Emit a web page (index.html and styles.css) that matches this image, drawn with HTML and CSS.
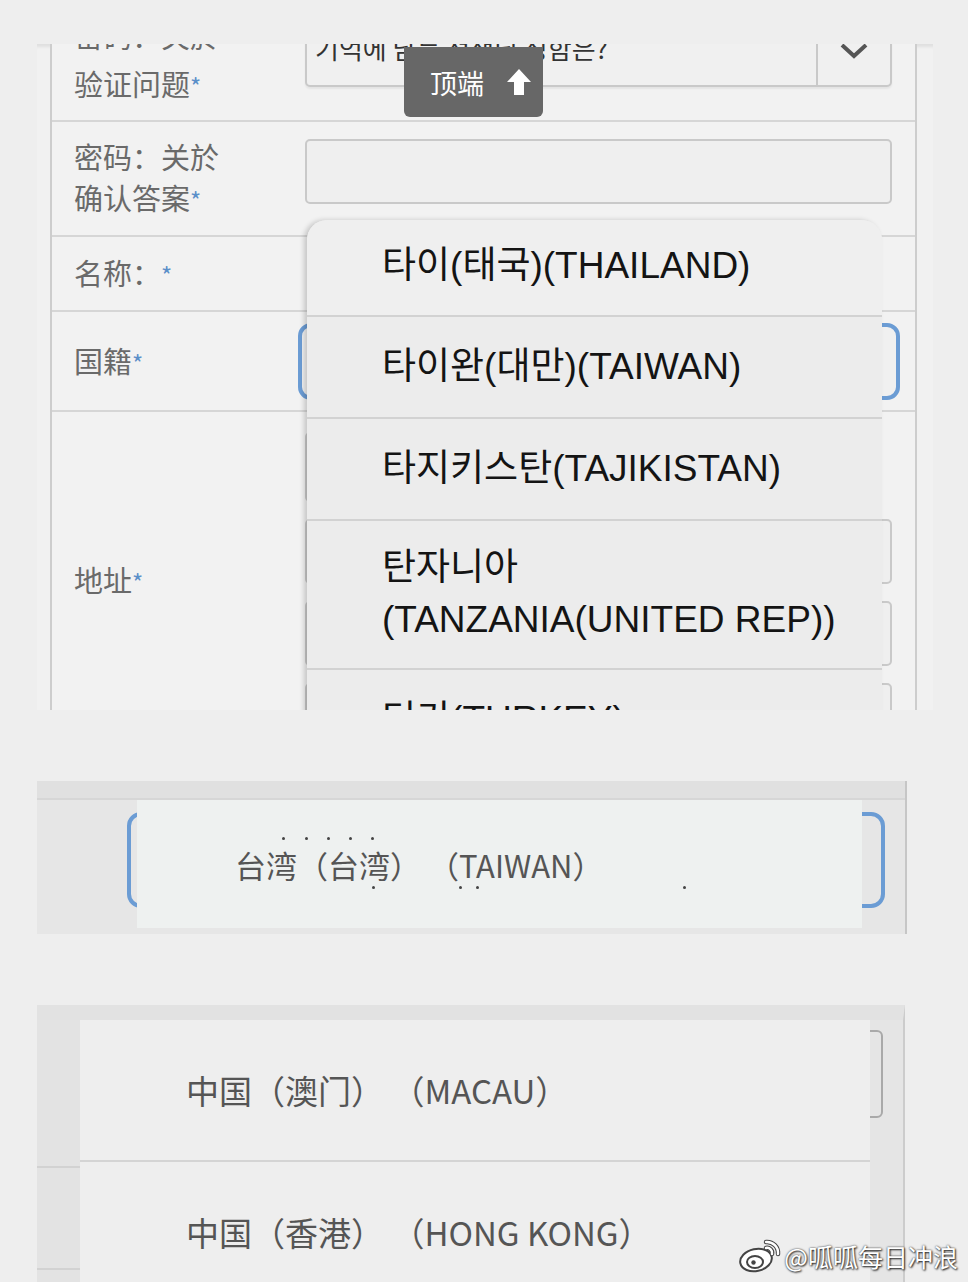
FILE: index.html
```html
<!DOCTYPE html>
<html lang="zh-CN">
<head>
    <meta charset="UTF-8">
    <meta name="viewport" content="width=device-width, initial-scale=1.0">
    <title>国籍选择</title>
    <link rel="stylesheet" href="styles.css">
</head>
<body>
    <div class="page">
        <!-- 第一张截图：注册表单 + 打开的国家下拉列表 -->
        <div class="shot shot-form">
            <div class="form">
                <div class="row row-question">
                    <div class="label">密码：关於<br>验证问题<span class="req">*</span></div>
                    <div class="field">
                        <div class="select">
                            <span class="select-text">기억에 남는 선생님 성함은?</span>
                            <span class="select-btn">
                                <svg width="30" height="18" viewBox="0 0 30 18"><path d="M3 3 L15 14 L27 3" fill="none" stroke="#555" stroke-width="4"/></svg>
                            </span>
                        </div>
                    </div>
                </div>
                <div class="row row-answer">
                    <div class="label">密码：关於<br>确认答案<span class="req">*</span></div>
                    <div class="field"><div class="input"></div></div>
                </div>
                <div class="row row-name">
                    <div class="label">名称：<span class="req">*</span></div>
                    <div class="field"></div>
                </div>
                <div class="row row-country">
                    <div class="label">国籍<span class="req">*</span></div>
                    <div class="field"><div class="select-focus"></div></div>
                </div>
                <div class="row row-address">
                    <div class="label">地址<span class="req">*</span></div>
                    <div class="field field-stack">
                        <div class="input input-short"></div>
                        <div class="input"></div>
                        <div class="input"></div>
                        <div class="input"></div>
                    </div>
                </div>
            </div>

            <ul class="dropdown">
                <li class="first">타이(태국)(THAILAND)</li>
                <li>타이완(대만)(TAIWAN)</li>
                <li>타지키스탄(TAJIKISTAN)</li>
                <li class="two-line">탄자니아<br>(TANZANIA(UNITED REP))</li>
                <li>터키(TURKEY)</li>
            </ul>

            <div class="to-top">
                <span>顶端</span>
                <svg width="26" height="28" viewBox="0 0 26 28"><path d="M13 1 L25 14 L18 14 L18 27 L8 27 L8 14 L1 14 Z" fill="#fff"/></svg>
            </div>
        </div>

        <!-- 第二张截图：中文界面的台湾选项 -->
        <div class="shot shot-tw">
            <div class="tw-band"></div>
            <div class="tw-select"></div>
            <div class="tw-option">
                <span class="tw-text">台湾（台湾） （TAIWAN）</span>
                <span class="dot d1"></span><span class="dot d2"></span><span class="dot d3"></span>
                <span class="dot d4"></span><span class="dot d5"></span><span class="dot d6"></span>
                <span class="dot d7"></span><span class="dot d8"></span><span class="dot d9"></span>
            </div>
        </div>

        <!-- 第三张截图：澳门 / 香港 -->
        <div class="shot shot-cn">
            <div class="cn-side">
                <div class="cn-side-row"></div>
                <div class="cn-side-row cn-side-mid"></div>
            </div>
            <div class="cn-main">
                <div class="cn-select"></div>
                <ul class="cn-list">
                    <li>中国（澳门） （MACAU）</li>
                    <li>中国（香港） （HONG KONG）</li>
                </ul>
            </div>
        </div>
    </div>

    <div class="watermark">
        <svg width="44" height="34" viewBox="0 0 44 34">
            <ellipse cx="18" cy="21" rx="16" ry="11" transform="rotate(-12 18 21)" fill="#fff" stroke="#444" stroke-width="2"/>
            <ellipse cx="17" cy="23" rx="8" ry="6" fill="none" stroke="#444" stroke-width="2"/>
            <circle cx="15.5" cy="23.5" r="2.2" fill="#444"/>
            <path d="M28 3 A11 11 0 0 1 40 15" fill="none" stroke="#444" stroke-width="4.5" stroke-linecap="round"/>
            <path d="M28 3 A11 11 0 0 1 40 15" fill="none" stroke="#fff" stroke-width="2.5" stroke-linecap="round"/>
            <path d="M28 9 A5 5 0 0 1 34 15" fill="none" stroke="#444" stroke-width="4.5" stroke-linecap="round"/>
            <path d="M28 9 A5 5 0 0 1 34 15" fill="none" stroke="#fff" stroke-width="2.5" stroke-linecap="round"/>
        </svg>
        <span>@呱呱每日冲浪</span>
    </div>
</body>
</html>
```

FILE: styles.css
```css
body {
    margin: 0;
    width: 968px;
    height: 1282px;
    overflow: hidden;
    position: relative;
    background-color: #eeeeee;
    font-family: "Noto Sans CJK SC", "Liberation Sans", sans-serif;
}

.page {
    display: flex;
    flex-direction: column;
    gap: 71px;
    padding-top: 44px;
}

.shot {
    position: relative;
    overflow: hidden;
    margin-left: 37px;
}

/* ---------- 截图 1 ---------- */

.shot-form {
    width: 896px;
    height: 666px;
    background-color: #f1f1f1;
    box-shadow: inset 0 5px 3px -2px rgba(0, 0, 0, 0.07);
}

.form {
    margin: -38px 16px 0 13px;
    border-left: 2px solid #cdcdcd;
    border-right: 2px solid #cdcdcd;
    background-color: #f2f2f2;
}

.row {
    display: grid;
    grid-template-columns: 253px 587px;
    padding-right: 23px;
    border-bottom: 2px solid #d6d6d6;
}

.label {
    padding-left: 22px;
    font-size: 29px;
    line-height: 41px;
    color: #6a6a6a;
}

.req {
    color: #5b8fc9;
    font-size: 24px;
}

.row-question {
    height: 114px;
}

.row-question .label {
    padding-top: 5px;
    line-height: 48px;
}

.select {
    margin-top: 16px;
    height: 61px;
    display: flex;
    background-color: #f0f0f0;
    border: 2px solid #c9c9c9;
    border-radius: 5px;
    box-shadow: 0 2px 2px rgba(0, 0, 0, 0.06);
}

.select-text {
    flex: 1;
    padding: 5px 8px;
    font-family: "Noto Sans CJK KR", sans-serif;
    font-size: 26px;
    color: #333;
    white-space: nowrap;
    overflow: hidden;
}

.select-btn {
    width: 72px;
    border-left: 2px solid #c9c9c9;
    display: flex;
    justify-content: center;
    padding-top: 18px;
}

.row-answer {
    height: 113px;
}

.row-answer .label {
    padding-top: 14px;
}

.input {
    height: 61px;
    background-color: #efefef;
    border: 2px solid #c9c9c9;
    border-radius: 5px;
}

.row-answer .input {
    margin-top: 17px;
}

.row-name {
    height: 73px;
    align-items: center;
}

.row-country {
    height: 98px;
    align-items: center;
}

.select-focus {
    height: 69px;
    margin: 0 -8px 0 -7px;
    border: 4px solid #6b9cd4;
    border-radius: 13px;
    background-color: #f0f0f0;
}

.row-address {
    height: 320px;
    align-items: center;
}

.field-stack {
    display: flex;
    flex-direction: column;
    gap: 17px;
    align-self: start;
    padding-top: 20px;
}

.input-short {
    width: 300px;
    height: 66px;
}

/* 下拉列表 */

.dropdown {
    position: absolute;
    left: 270px;
    top: 176px;
    width: 575px;
    margin: 0;
    padding: 0;
    list-style: none;
    background-color: #ececec;
    border-radius: 20px 20px 0 0;
    box-shadow: -3px 0 5px rgba(0, 0, 0, 0.18);
    font-family: "Liberation Sans", "Noto Sans CJK KR", sans-serif;
    font-size: 37px;
    line-height: 52px;
    color: #141414;
}

.dropdown li {
    padding: 24px 0 24px 75px;
    border-bottom: 2px solid #d2d2d2;
    white-space: nowrap;
}

.dropdown li.first {
    padding-top: 20px;
    padding-bottom: 23px;
    background-color: #efefef;
    border-radius: 20px 20px 0 0;
}

.dropdown li.two-line {
    padding-top: 21px;
    padding-bottom: 22px;
}

/* 顶端按钮 */

.to-top {
    position: absolute;
    left: 367px;
    top: 3px;
    width: 139px;
    height: 70px;
    display: flex;
    align-items: center;
    gap: 22px;
    padding-left: 26px;
    box-sizing: border-box;
    background-color: #676767;
    border-radius: 0 0 6px 6px;
    color: #fff;
    font-size: 27px;
}

/* ---------- 截图 2 ---------- */

.shot-tw {
    width: 868px;
    height: 153px;
    background-color: #e6e6e6;
    border-right: 2px solid #c6c6c6;
}

.tw-band {
    height: 17px;
    background-color: #e0e0e0;
    border-bottom: 2px solid #d6d6d6;
}

.tw-select {
    margin: 12px 20px 0 90px;
    height: 88px;
    border: 4px solid #6b9cd4;
    border-radius: 14px;
}

.tw-option {
    position: absolute;
    left: 100px;
    top: 19px;
    width: 725px;
    height: 128px;
    display: flex;
    align-items: center;
    padding-left: 98px;
    box-sizing: border-box;
    background-color: #eef1f0;
    font-size: 31px;
    color: #555;
}

.tw-text {
    white-space: pre;
}

.dot {
    position: absolute;
    width: 3px;
    height: 3px;
    border-radius: 50%;
    background-color: #444;
}

.d1 { left: 145px; top: 37px; }
.d2 { left: 168px; top: 37px; }
.d3 { left: 190px; top: 37px; }
.d4 { left: 212px; top: 37px; }
.d5 { left: 234px; top: 37px; }
.d6 { left: 235px; top: 86px; }
.d7 { left: 322px; top: 86px; }
.d8 { left: 339px; top: 86px; }
.d9 { left: 546px; top: 86px; }

/* ---------- 截图 3 ---------- */

.shot-cn {
    width: 868px;
    height: 277px;
    display: flex;
    background-color: #e5e5e5;
    border-right: 2px solid #cccccc;
    border-top: 15px solid #e2e2e2;
    box-sizing: border-box;
}

.cn-side {
    width: 43px;
    background-color: #e3e3e3;
}

.cn-side-row {
    height: 146px;
    border-bottom: 2px solid #d2d2d2;
}

.cn-side-mid {
    height: 100px;
}

.cn-main {
    flex: 1;
    position: relative;
}

.cn-select {
    margin: 10px 20px 0 0;
    height: 84px;
    border: 2px solid #a9a9a9;
    border-radius: 6px;
}

.cn-list {
    position: absolute;
    left: 0;
    top: 0;
    width: 790px;
    height: 100%;
    margin: 0;
    padding: 0;
    list-style: none;
    background-color: #eeeeee;
    font-size: 33px;
    color: #555;
}

.cn-list li {
    height: 140px;
    display: flex;
    align-items: center;
    padding-left: 106px;
    border-bottom: 2px solid #d4d4d4;
    white-space: pre;
}

/* 水印 */

.watermark {
    position: absolute;
    right: 10px;
    bottom: 8px;
    display: flex;
    align-items: center;
    gap: 2px;
    color: #fff;
    font-size: 25px;
    text-shadow: 0 0 2px #333, 1px 1px 2px #222;
}
```
